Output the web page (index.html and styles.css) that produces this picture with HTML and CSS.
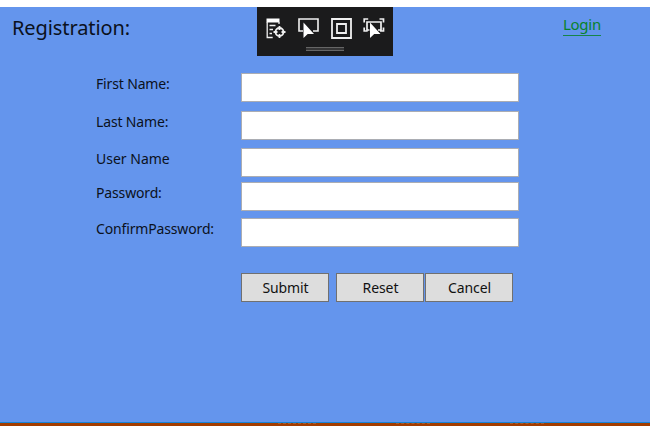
FILE: index.html
```html
<!DOCTYPE html>
<html lang="en">
<head>
<meta charset="utf-8">
<title>Registration</title>
<link rel="stylesheet" href="styles.css">
</head>
<body>
<main class="window">
  <header class="header">
    <h1 class="title">Registration:</h1>
    <a class="login" href="#">Login</a>
  </header>
  <form class="form">
    <div class="row"><label for="first">First Name:</label><input id="first"></div>
    <div class="row"><label for="last">Last Name:</label><input id="last"></div>
    <div class="row row-user"><label class="l-user" for="user">User Name</label><input id="user"></div>
    <div class="row row-password"><label for="pass">Password:</label><input id="pass" type="password"></div>
    <div class="row"><label for="confirm">ConfirmPassword:</label><input id="confirm" type="password"></div>
    <div class="actions">
      <button type="button">Submit</button>
      <button type="button" class="reset">Reset</button>
      <button type="button">Cancel</button>
    </div>
  </form>
  <div class="toolbar">
    <svg width="136" height="49" viewBox="0 0 136 49" fill="none" stroke="#f0f0f0">
      <g>
        <path d="M9.500 11.500h13v4h-13z" fill="#fff" stroke="none"/>
        <path d="M10.200 15v15.500h5.500M12.500 18.500h6M12.500 22.500h3.500M12.500 26.500h2.500M22 15v2" stroke-width="1.300"/>
        <circle cx="22.500" cy="25" r="4" stroke-width="1.800"/>
        <path d="M22.500 19v4M22.500 27v4M16.500 25h4M24.500 25h4" stroke-width="1.800"/>
      </g>
      <g>
        <path d="M46 24H42V12h19v12h-5" stroke-width="1.600"/>
        <path d="M46.500 15.500V31l4.200-4h6.300z" fill="#fff" stroke="none"/>
      </g>
      <g stroke-width="1.800"><path d="M75 12h19v19H75zM80 17h9v9h-9z"/></g>
      <g>
        <path d="M107.200 15.500V12h4M122.500 12h4v3.500M126.500 20.500V24H123M107.200 20.500V24h3.500M112.500 23H110v-8h14v8h-3" stroke-width="1.700"/>
        <path d="M113 15.500V31l4.200-4h6.300z" fill="#fff" stroke="none"/>
      </g>
      <path d="M49 42h38" stroke="#353536" stroke-width="2"/>
      <path d="M49 40.500h38M49 43.500h38" stroke="#666"/>
    </svg>
  </div>
  <footer class="status"><span class="mark m1"></span><span class="mark m2"></span><span class="mark m3"></span></footer>
</main>
</body>
</html>
```
FILE: styles.css
```css
* { box-sizing: border-box; }
body { margin: 0; background: #fff; font-family: "Noto Sans", "Open Sans", sans-serif; color: #0b1120; }
.window { position: relative; display: flex; flex-direction: column; height: 419px; margin-top: 7px; background: #6495ed; overflow: hidden; }
.header { display: flex; justify-content: space-between; height: 66px; padding: 8px 49px 0 12px; }
.title { margin: 0; font-size: 20px; line-height: 26px; font-weight: 400; letter-spacing: -0.1px; }
.login { align-self: flex-start; height: 21px; font-size: 15px; line-height: 18px; letter-spacing: -0.25px; color: #08822c; text-decoration: none; border-bottom: 1px solid #168448; }
.form { flex: 1; padding-left: 96px; }
.row { display: flex; height: 29px; margin-bottom: 9px; }
.row:nth-child(2) { margin-bottom: 8px; }
.row-user { margin-bottom: 5px; }
.row-password { margin-bottom: 7px; }
.row label { width: 145px; font-size: 14px; line-height: 22px; white-space: nowrap; letter-spacing: -0.15px; }
.row .l-user { letter-spacing: 0; }
.row input { width: 278px; height: 29px; padding: 2px 4px; border: 1px solid #abadb3; border-radius: 0; background: #fff; font: inherit; outline: none; }
.actions { display: flex; margin: 26px 0 0 145px; }
.actions button { width: 88px; height: 29px; padding: 0 0 0 1px; border: 1px solid #707070; border-radius: 0; background: #ddd; color: #111; font: 14px/27px "Noto Sans", sans-serif; letter-spacing: -0.1px; }
.actions .reset { margin: 0 1px 0 7px; }
.toolbar { position: absolute; left: 257px; top: 0; width: 136px; height: 49px; background: #1b1b1c; }
.toolbar svg { display: block; }
.status { display: flex; height: 4px; border-top: 1px solid #1683d8; background: #a33d00; }
.mark { height: 1px; border-top: 1px dashed #a85c30; }
.m1 { width: 38px; margin-left: 278px; }
.m2 { width: 34px; margin-left: 80px; }
.m3 { width: 34px; margin-left: 80px; }
```
